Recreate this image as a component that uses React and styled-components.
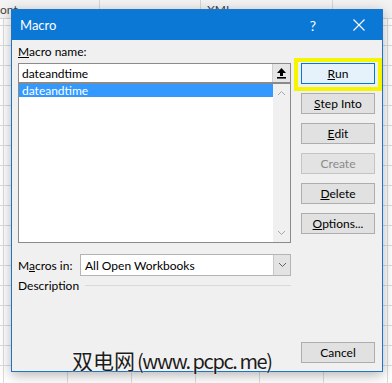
import React from 'react';
import styled, { createGlobalStyle } from 'styled-components';

const GlobalStyle = createGlobalStyle`
  html, body {
    margin: 0;
    padding: 0;
    background: #fff;
  }
`;

const UI_FONT = `Lato, "Open Sans", "Liberation Sans", sans-serif`;

const Styled = {
  Page: styled.div`
    position: relative;
    display: flex;
    flex-direction: column;
    width: 392px;
    height: 383px;
    overflow: hidden;
    font-family: ${UI_FONT};
    font-size: 12px;
    color: #000;
  `,
  Ribbon: styled.div`
    display: flex;
    height: 18px;
    flex: none;
    background: #f3f3f3;
    border-bottom: 1px solid #d4d4d4;
  `,
  RibbonGroup: styled.div`
    width: ${(p) => p.$width}px;
    flex: none;
    box-sizing: border-box;
    padding: 3px 0 0 ${(p) => p.$indent}px;
    border-right: 1px solid #d6d6d6;
    color: #444;
    font-size: 12px;
    line-height: 14px;
    white-space: nowrap;
  `,
  Sheet: styled.div`
    flex: 1;
    background-color: #fff;
    background-image:
      linear-gradient(#dcdcdc 1px, transparent 1px),
      linear-gradient(90deg, #dcdcdc 1px, transparent 1px);
    background-size: 64px 20px;
    background-position: 3px 6px;
  `,
  Dialog: styled.div`
    position: absolute;
    left: 11px;
    top: 9px;
    width: 372px;
    height: 363px;
    box-sizing: border-box;
    display: flex;
    flex-direction: column;
    border: 1px solid #1f74c8;
    background: #f0f0f0;
    box-shadow: 0 3px 12px rgba(0, 0, 0, 0.3);
  `,
  TitleBar: styled.div`
    display: flex;
    align-items: center;
    height: 30px;
    flex: none;
    padding: 0 0 0 8px;
    background: #0b78d6;
    color: #fff;
  `,
  Title: styled.div`
    flex: 1;
    font-size: 13px;
  `,
  Help: styled.div`
    width: 14px;
    margin-right: 33px;
    text-align: center;
    font-size: 14px;
  `,
  Close: styled.div`
    display: flex;
    width: 12px;
    margin-right: 17px;
  `,
  Body: styled.div`
    flex: 1;
    display: grid;
    grid-template-columns: 273px 74px;
    column-gap: 10px;
    padding: 4px 7px 8px 6px;
  `,
  LeftColumn: styled.div`
    display: flex;
    flex-direction: column;
  `,
  Label: styled.div`
    line-height: 16px;
    white-space: nowrap;
  `,
  NameInput: styled.div`
    display: flex;
    align-items: center;
    height: 20px;
    margin-top: 3px;
    box-sizing: border-box;
    border: 1px solid #8a8a8a;
    background: #fff;
    padding-left: 3px;
  `,
  InputText: styled.div`
    flex: 1;
  `,
  UpButton: styled.div`
    display: flex;
    align-items: center;
    justify-content: center;
    width: 17px;
    height: 18px;
    background: #e6e6e6;
    border-left: 1px solid #d0d0d0;
  `,
  List: styled.div`
    display: flex;
    height: 160px;
    box-sizing: border-box;
    border: 1px solid #8a8a8a;
    background: #fff;
  `,
  Items: styled.div`
    flex: 1;
  `,
  Item: styled.div`
    height: 13px;
    line-height: 13px;
    padding-left: 3px;
    background: ${(p) => (p.$selected ? '#3399ff' : 'transparent')};
    color: ${(p) => (p.$selected ? '#fff' : '#000')};
  `,
  Scrollbar: styled.div`
    display: flex;
    flex-direction: column;
    justify-content: space-between;
    align-items: center;
    width: 17px;
    padding: 6px 0 6px;
    background: #f0f0f0;
  `,
  MacrosRow: styled.div`
    display: flex;
    align-items: center;
    margin-top: 11px;
  `,
  RowLabel: styled.div`
    width: 62px;
    flex: none;
  `,
  Select: styled.div`
    flex: 1;
    display: flex;
    align-items: center;
    height: 22px;
    box-sizing: border-box;
    border: 1px solid #b4b4b4;
    background: #fff;
    padding-left: 4px;
  `,
  SelectText: styled.div`
    flex: 1;
  `,
  SelectButton: styled.div`
    display: flex;
    align-items: center;
    justify-content: center;
    width: 16px;
    height: 20px;
    background: #e3e3e3;
    border-left: 1px solid #c8c8c8;
  `,
  DescriptionRow: styled.div`
    display: flex;
    align-items: center;
    margin-top: 2px;
    line-height: 16px;
  `,
  Rule: styled.div`
    flex: 1;
    height: 0;
    margin-left: 6px;
    margin-top: -2px;
    border-top: 1px solid #d9d9d9;
  `,
  RightColumn: styled.div`
    display: flex;
    flex-direction: column;
    gap: 9px;
    padding-top: 19px;
  `,
  Button: styled.div`
    position: relative;
    height: 21px;
    box-sizing: border-box;
    display: flex;
    align-items: center;
    justify-content: center;
    border: 1px solid ${(p) => (p.$default ? '#0078d7' : p.$disabled ? '#c4c4c4' : '#adadad')};
    background: ${(p) => (p.$default ? '#e5f1fb' : p.$disabled ? '#e3e3e3' : '#e1e1e1')};
    color: ${(p) => (p.$disabled ? '#8a8a8a' : '#000')};
    margin-top: ${(p) => (p.$bottom ? 'auto' : '0')};
  `,
  Highlight: styled.span`
    position: absolute;
    left: -8px;
    right: -8px;
    top: -6px;
    bottom: -8px;
    border: 4px solid #f5f500;
    pointer-events: none;
  `,
  Watermark: styled.div`
    position: absolute;
    left: 72px;
    top: 347px;
    display: flex;
    align-items: baseline;
    font-family: "Noto Sans CJK SC", sans-serif;
    font-size: 21px;
    line-height: 26px;
    color: #1c1c1c;
    white-space: nowrap;
    text-shadow: 0 0 2px #fff;
  `,
  WatermarkLatin: styled.span`
    font-size: 20px;
    letter-spacing: -1.4px;
    margin-left: 2px;
  `,
};

function Mnemonic({ text, at = 0 }) {
  return (
    <>
      {text.slice(0, at)}
      <u>{text[at]}</u>
      {text.slice(at + 1)}
    </>
  );
}

function UpIcon() {
  return (
    <svg width="11" height="12" viewBox="0 0 11 12">
      <polygon points="5.5,1 1,6 4,6 4,9 7,9 7,6 10,6" fill="#000" />
      <rect x="1" y="10" width="9" height="1.6" fill="#000" />
    </svg>
  );
}

function Chevron({ down, color = '#a6a6a6' }) {
  return (
    <svg width="9" height="6" viewBox="0 0 9 6">
      <polyline
        points={down ? '1,1 4.5,4.5 8,1' : '1,5 4.5,1.5 8,5'}
        fill="none"
        stroke={color}
        strokeWidth="1"
      />
    </svg>
  );
}

function CloseIcon() {
  return (
    <svg width="12" height="12" viewBox="0 0 12 12">
      <path d="M0.5 0.5 L11.5 11.5 M11.5 0.5 L0.5 11.5" stroke="#fff" strokeWidth="1.1" />
    </svg>
  );
}

const buttons = [
  { label: 'Run', at: 0, isDefault: true },
  { label: 'Step Into', at: 0 },
  { label: 'Edit', at: 0 },
  { label: 'Create', disabled: true },
  { label: 'Delete', at: 0 },
  { label: 'Options...', at: 0 },
];

export default function App() {
  return (
    <>
      <GlobalStyle />
      <Styled.Page>
        <Styled.Ribbon>
          <Styled.RibbonGroup $width={100} $indent={0}>ont</Styled.RibbonGroup>
          <Styled.RibbonGroup $width={101} $indent={0} />
          <Styled.RibbonGroup $width={132} $indent={6}>XML</Styled.RibbonGroup>
        </Styled.Ribbon>
        <Styled.Sheet />

        <Styled.Dialog>
          <Styled.TitleBar>
            <Styled.Title>Macro</Styled.Title>
            <Styled.Help>?</Styled.Help>
            <Styled.Close>
              <CloseIcon />
            </Styled.Close>
          </Styled.TitleBar>

          <Styled.Body>
            <Styled.LeftColumn>
              <Styled.Label>
                <Mnemonic text="Macro name:" />
              </Styled.Label>
              <Styled.NameInput>
                <Styled.InputText>dateandtime</Styled.InputText>
                <Styled.UpButton>
                  <UpIcon />
                </Styled.UpButton>
              </Styled.NameInput>
              <Styled.List>
                <Styled.Items>
                  <Styled.Item $selected>dateandtime</Styled.Item>
                </Styled.Items>
                <Styled.Scrollbar>
                  <Chevron />
                  <Chevron down />
                </Styled.Scrollbar>
              </Styled.List>
              <Styled.MacrosRow>
                <Styled.RowLabel>
                  <Mnemonic text="Macros in:" at={1} />
                </Styled.RowLabel>
                <Styled.Select>
                  <Styled.SelectText>All Open Workbooks</Styled.SelectText>
                  <Styled.SelectButton>
                    <Chevron down color="#606060" />
                  </Styled.SelectButton>
                </Styled.Select>
              </Styled.MacrosRow>
              <Styled.DescriptionRow>
                Description
                <Styled.Rule />
              </Styled.DescriptionRow>
            </Styled.LeftColumn>

            <Styled.RightColumn>
              {buttons.map((b) => (
                <Styled.Button key={b.label} $default={b.isDefault} $disabled={b.disabled}>
                  {b.disabled ? b.label : <Mnemonic text={b.label} at={b.at} />}
                  {b.isDefault && <Styled.Highlight />}
                </Styled.Button>
              ))}
              <Styled.Button $bottom>Cancel</Styled.Button>
            </Styled.RightColumn>
          </Styled.Body>
        </Styled.Dialog>

        <Styled.Watermark>
          双电网
          <Styled.WatermarkLatin>(www. pcpc. me)</Styled.WatermarkLatin>
        </Styled.Watermark>
      </Styled.Page>
    </>
  );
}
